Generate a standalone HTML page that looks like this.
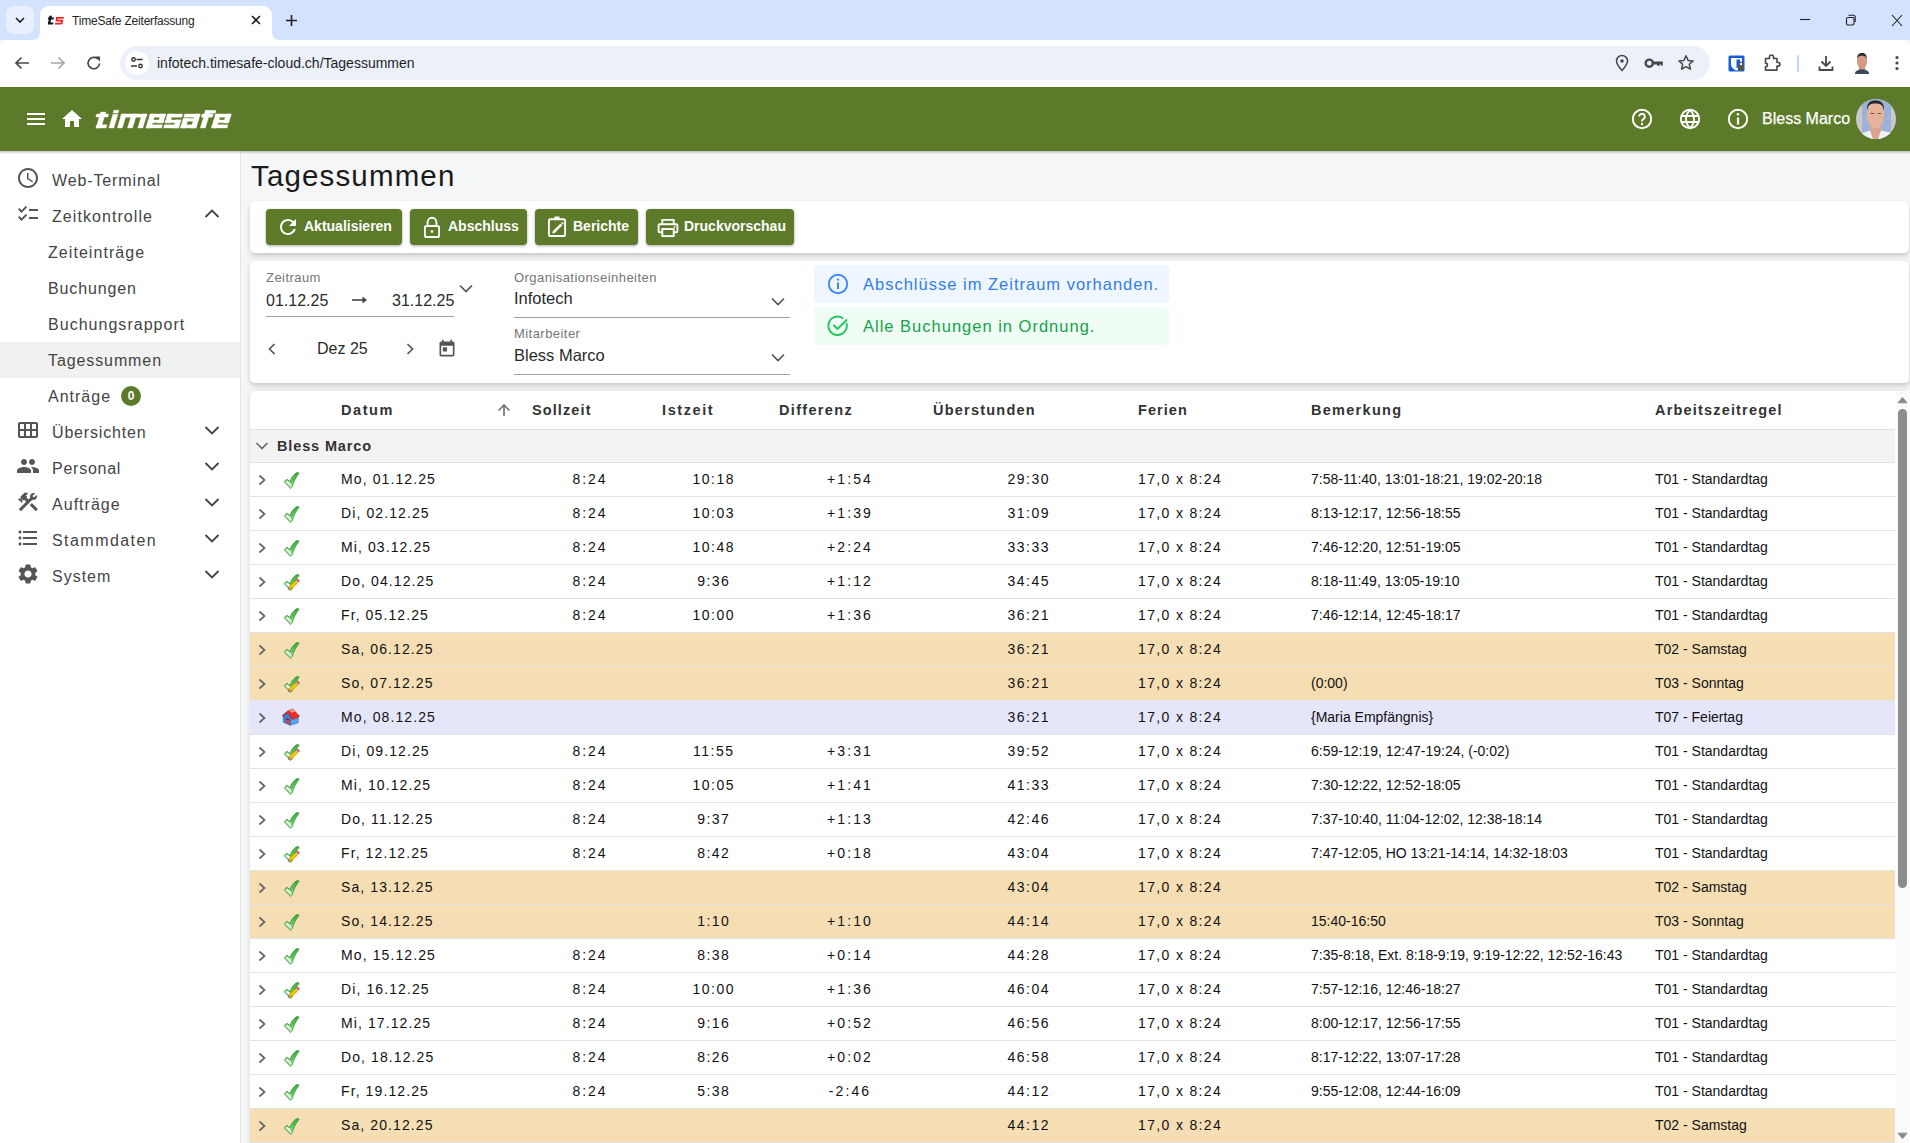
<!DOCTYPE html><html><head><meta charset="utf-8"><title>TimeSafe Zeiterfassung</title><style>
*{box-sizing:border-box;margin:0;padding:0}
html,body{width:1910px;height:1143px;overflow:hidden;background:#f5f6f8;font-family:"Liberation Sans",sans-serif;color:#212121}
.a{position:absolute;white-space:nowrap}
svg{position:absolute;display:block;overflow:visible}
.nav{position:absolute;left:52px;font-size:16px;color:#444;letter-spacing:0.95px}
.sub{position:absolute;left:48px;font-size:16px;color:#444;letter-spacing:0.95px}
.chev{position:absolute;left:202px}
.btn{position:absolute;top:209px;height:36px;background:#5c7a29;border-radius:4px;box-shadow:0 1px 3px rgba(0,0,0,.35)}
.btn .t{position:absolute;top:9px;color:#fff;font-weight:bold;font-size:14px;white-space:nowrap;line-height:16px}
.lbl{position:absolute;font-size:13px;color:#757575;white-space:nowrap;line-height:15px;letter-spacing:0.45px}
.val{position:absolute;font-size:16px;color:#2a2a2a;white-space:nowrap;line-height:18px}
.ul{position:absolute;height:1px;background:#a2a2a2}
.row{position:absolute;left:250px;width:1645px;height:34px;border-bottom:1px solid #e3e3e3;background:#fff}
.row .c{position:absolute;top:9px;font-size:14px;line-height:15px;color:#111;white-space:nowrap;letter-spacing:1.1px}
.row .r{position:absolute;top:9px;font-size:14px;line-height:15px;color:#111;white-space:nowrap}
.we{background:#f5deb3}
.ho{background:#e6e6fa}
.hd{position:absolute;top:403px;font-size:14.5px;font-weight:bold;color:#333;line-height:15px;white-space:nowrap}
</style></head><body>
<div class="a" style="left:0;top:0;width:1910px;height:40px;background:#d3e3fd"></div>
<div class="a" style="left:6px;top:6px;width:28px;height:28px;background:#e8f0fe;border-radius:8px"></div>
<svg style="left:14px;top:14px" width="12" height="12" viewBox="0 0 12 12"><path d="M2 4l4 4 4-4" fill="none" stroke="#1f1f1f" stroke-width="1.6"/></svg>
<div class="a" style="left:40px;top:6px;width:232px;height:40px;background:#fff;border-radius:9px 9px 0 0"></div>
<svg style="left:32px;top:32px" width="8" height="8" viewBox="0 0 8 8"><path d="M0 8 Q8 8 8 0 L8 8Z" fill="#fff"/></svg>
<svg style="left:272px;top:32px" width="8" height="8" viewBox="0 0 8 8"><path d="M8 8 Q0 8 0 0 L0 8Z" fill="#fff"/></svg>
<svg style="left:47px;top:15px" width="18" height="10" viewBox="0 0 18 10"><path d="M2.3 0.8L5 0.8 4.6 2.6 7 2.6 6.6 4.4 4.2 4.4 3.5 7.6 6.5 7.6 6 9.5 1.8 9.5C1 9.5 0.7 9 0.9 8.2L1.8 4.4 0.8 4.4 1.2 2.6 2 2.6Z" fill="#161616"/><path d="M9 2L17 2 16.6 3.8 10.8 3.8 10.6 4.8 15 4.8C15.9 4.8 16.3 5.3 16.1 6.2L15.5 8.4C15.3 9.1 14.8 9.5 14 9.5L7.8 9.5 8.2 7.7 13.8 7.7 14.1 6.6 9.7 6.6C8.8 6.6 8.4 6.1 8.6 5.2L9 3.2Z" fill="#ee2222"/></svg>
<div class="a" style="left:72px;top:14px;font-size:12px;color:#1f1f1f;line-height:15px;letter-spacing:-0.2px">TimeSafe Zeiterfassung</div>
<svg style="left:250px;top:14px" width="12" height="12" viewBox="0 0 12 12"><path d="M2 2l8 8M10 2l-8 8" stroke="#1f1f1f" stroke-width="1.6"/></svg>
<svg style="left:285px;top:14px" width="13" height="13" viewBox="0 0 13 13"><path d="M6.5 1v11M1 6.5h11" stroke="#1f1f1f" stroke-width="1.6"/></svg>
<svg style="left:1799px;top:13px" width="12" height="12" viewBox="0 0 12 12"><path d="M1 6.5h10" stroke="#1f1f1f" stroke-width="1.1"/></svg>
<svg style="left:1844px;top:14px" width="13" height="13" viewBox="0 0 13 13"><rect x="2.5" y="3.5" width="7.5" height="7.5" rx="1.5" fill="none" stroke="#1f1f1f" stroke-width="1.1"/><path d="M4.5 1.3h4.7a2 2 0 0 1 2 2V8" fill="none" stroke="#1f1f1f" stroke-width="1.1"/></svg>
<svg style="left:1891px;top:14px" width="12" height="13" viewBox="0 0 12 13"><path d="M1 1l10 11M11 1L1 12" stroke="#1f1f1f" stroke-width="1.1"/></svg>
<div class="a" style="left:0;top:40px;width:1910px;height:47px;background:#fff;border-radius:8px 8px 0 0"></div>
<svg style="left:13px;top:54px" width="18" height="18" viewBox="0 0 18 18"><path d="M16 9H3M8.5 3.5L3 9l5.5 5.5" fill="none" stroke="#474747" stroke-width="1.7"/></svg>
<svg style="left:49px;top:54px" width="18" height="18" viewBox="0 0 18 18"><path d="M2 9h13M9.5 3.5L15 9l-5.5 5.5" fill="none" stroke="#a8a8a8" stroke-width="1.7"/></svg>
<svg style="left:85px;top:54px" width="18" height="18" viewBox="0 0 18 18"><path d="M14.5 9.5A5.7 5.7 0 1 1 12.8 5" fill="none" stroke="#474747" stroke-width="1.7"/><path d="M10 2.5h5v5z" fill="#474747"/></svg>
<div class="a" style="left:120px;top:46px;width:1590px;height:34px;background:#ecf1f9;border-radius:17px"></div>
<div class="a" style="left:125px;top:51px;width:24px;height:24px;background:#fff;border-radius:12px"></div>
<svg style="left:129px;top:55px" width="16" height="16" viewBox="0 0 16 16"><circle cx="4.5" cy="4.5" r="1.7" fill="none" stroke="#333" stroke-width="1.4"/><path d="M7.5 4.5h6M2 11h6" stroke="#333" stroke-width="1.4"/><circle cx="11.5" cy="11" r="1.7" fill="none" stroke="#333" stroke-width="1.4"/></svg>
<div class="a" style="left:157px;top:55px;font-size:14px;color:#1f1f1f;line-height:17px">infotech.timesafe-cloud.ch/Tagessummen</div>
<svg style="left:1613px;top:54px" width="18" height="18" viewBox="0 0 18 18"><path d="M9 16.5C9 16.5 3.5 10.5 3.5 7A5.5 5.5 0 0 1 14.5 7C14.5 10.5 9 16.5 9 16.5Z" fill="none" stroke="#474747" stroke-width="1.5"/><circle cx="9" cy="7" r="1.8" fill="#474747"/></svg>
<svg style="left:1643px;top:54px" width="22" height="18" viewBox="0 0 22 18"><circle cx="6.3" cy="9.2" r="3.6" fill="none" stroke="#474747" stroke-width="2.4"/><path d="M9.5 7.6h10.3v4.2h-1.6v-1.2h-1.5v1.2h-2.6v-1.2H9.5z" fill="#474747"/></svg>
<svg style="left:1677px;top:54px" width="18" height="18" viewBox="0 0 18 18"><path d="M9 1.8l2.1 4.6 5 .5-3.8 3.4 1.1 4.9L9 12.7l-4.4 2.5 1.1-4.9L1.9 6.9l5-.5z" fill="none" stroke="#474747" stroke-width="1.5" stroke-linejoin="round"/></svg>
<svg style="left:1728px;top:55px" width="17" height="17" viewBox="0 0 17 17"><rect x="0.5" y="0.5" width="16" height="16" rx="1.5" fill="#175ddc"/><path d="M3 3h11v6.5c0 3-3 5.2-5.5 6C6 14.7 3 12.5 3 9.5z" fill="#fff"/><path d="M8.5 4.5h3.5v5c0 1.8-1.8 3.2-3.5 3.8z" fill="#175ddc"/><rect x="10" y="10" width="6" height="5.5" rx="1" fill="#555"/><path d="M11.3 10V8.8a1.7 1.7 0 0 1 3.4 0V10" fill="none" stroke="#555" stroke-width="1.2"/></svg>
<svg style="left:1763px;top:54px" width="18" height="18" viewBox="0 0 18 18"><path d="M2.5 4.5h4V3a2 2 0 0 1 4 0v1.5h3.5v4h1.2a1.8 1.8 0 0 1 0 3.6H14v4H2.5v-3.2a1.9 1.9 0 0 0 0-3.8z" fill="none" stroke="#474747" stroke-width="1.6" stroke-linejoin="round"/></svg>
<div class="a" style="left:1797px;top:55px;width:2px;height:17px;background:#c2d5f7;border-radius:1px"></div>
<svg style="left:1817px;top:54px" width="18" height="18" viewBox="0 0 18 18"><path d="M9 2v10M4.5 7.5L9 12l4.5-4.5M2.5 12.5v3.5h13v-3.5" fill="none" stroke="#474747" stroke-width="1.8"/></svg>
<svg style="left:1851px;top:52px" width="22" height="22" viewBox="0 0 22 22"><rect x="8" y="14" width="6" height="6" fill="#c98d77"/><ellipse cx="11" cy="9.5" rx="5" ry="7.5" fill="#d49a82"/><path d="M6 7.5C6 2.5 8 1 11 1S16 2.5 16 7.5C15 4.5 14 3.8 11 3.8S7 4.5 6 7.5Z" fill="#2a2a2a"/><path d="M4 22c0-3 2.5-4.5 7-4.5s7 1.5 7 4.5z" fill="#3a4a5a"/></svg>
<svg style="left:1893px;top:54px" width="8" height="18" viewBox="0 0 8 18"><circle cx="4" cy="3.5" r="1.6" fill="#474747"/><circle cx="4" cy="9" r="1.6" fill="#474747"/><circle cx="4" cy="14.5" r="1.6" fill="#474747"/></svg>
<div class="a" style="left:0;top:87px;width:1910px;height:64px;background:#5c7a29"></div>
<div class="a" style="left:27px;top:113px;width:18px;height:2px;background:#fff"></div><div class="a" style="left:27px;top:118px;width:18px;height:2px;background:#fff"></div><div class="a" style="left:27px;top:123px;width:18px;height:2px;background:#fff"></div>
<svg style="left:60px;top:107px" width="24" height="24" viewBox="0 0 24 24"><path d="M10 20v-6h4v6h5v-8h3L12 3 2 12h3v8z" fill="#fff"/></svg>
<svg style="left:90px;top:100px" width="145" height="35" viewBox="0 0 145 35"><g transform="translate(0,28) skewX(-16.7)" fill="#fff" stroke="#fff" stroke-width="0.35" stroke-linejoin="round"><rect x="6.0" y="-16.0" width="5.0" height="16.0"/><rect x="2.5" y="-14.0" width="12.0" height="3.0"/><rect x="6.0" y="-3.2" width="10.0" height="3.2"/><rect x="18.8" y="-13.8" width="5.0" height="13.8"/><rect x="18.6" y="-17.8" width="5.0" height="2.9"/><rect x="27.3" y="-14.0" width="25.5" height="3.2"/><rect x="27.3" y="-14.0" width="5.0" height="14.0"/><rect x="37.5" y="-14.0" width="5.0" height="14.0"/><rect x="47.8" y="-14.0" width="5.0" height="14.0"/><rect x="56.0" y="-14.0" width="5.0" height="14.0"/><rect x="56.0" y="-14.0" width="15.5" height="3.2"/><rect x="66.5" y="-14.0" width="5.0" height="8.8"/><rect x="56.0" y="-8.1" width="15.5" height="2.9"/><rect x="56.0" y="-3.2" width="15.5" height="3.2"/><rect x="73.5" y="-14.0" width="15.0" height="3.2"/><rect x="73.5" y="-14.0" width="5.0" height="8.8"/><rect x="73.5" y="-8.1" width="15.0" height="2.9"/><rect x="83.5" y="-8.1" width="5.0" height="8.1"/><rect x="73.5" y="-3.2" width="15.0" height="3.2"/><rect x="90.5" y="-14.0" width="15.5" height="3.2"/><rect x="101.0" y="-14.0" width="5.0" height="14.0"/><rect x="90.5" y="-9.6" width="15.5" height="2.8"/><rect x="90.5" y="-9.6" width="5.0" height="9.6"/><rect x="90.5" y="-3.2" width="15.5" height="3.2"/><rect x="110.3" y="-17.6" width="5.0" height="17.6"/><rect x="110.3" y="-17.6" width="10.5" height="2.8"/><rect x="108.0" y="-14.0" width="11.0" height="3.2"/><rect x="121.5" y="-14.0" width="5.0" height="14.0"/><rect x="121.5" y="-14.0" width="15.5" height="3.2"/><rect x="132.0" y="-14.0" width="5.0" height="8.8"/><rect x="121.5" y="-8.1" width="15.5" height="2.9"/><rect x="121.5" y="-3.2" width="15.5" height="3.2"/></g></svg>
<svg style="left:1630px;top:107px" width="24" height="24" viewBox="0 0 24 24"><circle cx="12" cy="12" r="9.2" fill="none" stroke="#fff" stroke-width="1.9"/><path d="M9.2 9.6a2.8 2.8 0 1 1 4.2 2.4c-.9.5-1.4 1-1.4 2v.6" fill="none" stroke="#fff" stroke-width="1.9"/><circle cx="12" cy="17" r="1.2" fill="#fff"/></svg>
<svg style="left:1678px;top:107px" width="24" height="24" viewBox="0 0 24 24"><circle cx="12" cy="12" r="9.2" fill="none" stroke="#fff" stroke-width="1.9"/><path d="M3.2 9h17.6M3.2 15h17.6" stroke="#fff" stroke-width="1.9"/><path d="M12 2.8c-3 3-4 6-4 9.2s1 6.2 4 9.2M12 2.8c3 3 4 6 4 9.2s-1 6.2-4 9.2" fill="none" stroke="#fff" stroke-width="1.9"/></svg>
<svg style="left:1726px;top:107px" width="24" height="24" viewBox="0 0 24 24"><circle cx="12" cy="12" r="9.2" fill="none" stroke="#fff" stroke-width="1.9"/><path d="M12 10.5v7" stroke="#fff" stroke-width="2.2"/><circle cx="12" cy="7.3" r="1.3" fill="#fff"/></svg>
<div class="a" style="left:1762px;top:110px;font-size:16px;color:#fff;line-height:18px;-webkit-text-stroke:0.25px #fff">Bless Marco</div>
<svg style="left:1856px;top:99px" width="40" height="40" viewBox="0 0 40 40"><defs><clipPath id="av"><circle cx="20" cy="20" r="20"/></clipPath></defs><g clip-path="url(#av)"><rect width="40" height="40" fill="#c9c9cd"/><rect x="6" y="0" width="29" height="37" fill="#9db2d8"/><rect x="14" y="24" width="11" height="16" fill="#d9a58e"/><ellipse cx="19.5" cy="16" rx="8.8" ry="13.5" fill="#e4b39c"/><path d="M11 12C10.5 4 14 1.5 19.5 1.5S28.5 4 28 12C27 6 25 4.5 19.5 4.5S12 6 11 12Z" fill="#2b2422"/><path d="M14.5 14.5h3.5M21.5 14.5h3.5" stroke="#8a4a3a" stroke-width="1.1"/><path d="M2 40L4 35 14 31.5 17 40ZM38 40L36 34 25 31.5 22 40Z" fill="#f2f2f4"/></g></svg>
<div class="a" style="left:0;top:151px;width:241px;height:992px;background:#fff;border-right:1px solid #e6e6e6"></div>
<div class="a" style="left:0;top:342px;width:240px;height:36px;background:#f1f1f1"></div>
<div class="nav" style="top:171px;line-height:20px;letter-spacing:0.87px">Web-Terminal</div>
<svg style="left:16px;top:166px" width="24" height="24" viewBox="0 0 24 24"><path d="M11.99 2C6.47 2 2 6.48 2 12s4.47 10 9.99 10C17.52 22 22 17.52 22 12S17.52 2 11.99 2zM12 20c-4.42 0-8-3.58-8-8s3.58-8 8-8 8 3.58 8 8-3.58 8-8 8zm.5-13H11v6l5.25 3.15.75-1.23-4.5-2.67z" fill="#555"/></svg>
<div class="nav" style="top:207px;line-height:20px;letter-spacing:1.07px">Zeitkontrolle</div>
<svg style="left:16px;top:202px" width="24" height="24" viewBox="0 0 24 24"><path d="M22 7h-9v2h9V7zm0 8h-9v2h9v-2zM5.54 11L2 7.46l1.41-1.41 2.12 2.12 4.24-4.24 1.41 1.41L5.54 11zm0 8L2 15.46l1.41-1.41 2.12 2.12 4.24-4.24 1.41 1.41L5.54 19z" fill="#555"/></svg>
<svg style="left:200px;top:202px" width="24" height="24" viewBox="0 0 24 24"><path d="M5.5 15l6.5-6.5 6.5 6.5" fill="none" stroke="#444" stroke-width="1.9"/></svg>
<div class="nav" style="top:423px;line-height:20px;letter-spacing:0.83px">Übersichten</div>
<svg style="left:16px;top:418px" width="24" height="24" viewBox="0 0 24 24"><path d="M20 4H4C2.9 4 2 4.9 2 6v12c0 1.1.9 2 2 2h16c1.1 0 2-.9 2-2V6c0-1.1-.9-2-2-2zM8 11H4V6h4v5zm6 0h-4V6h4v5zm6 0h-4V6h4v5zM8 18H4v-5h4v5zm6 0h-4v-5h4v5zm6 0h-4v-5h4v5z" fill="#555"/></svg>
<svg style="left:200px;top:418px" width="24" height="24" viewBox="0 0 24 24"><path d="M5.5 9l6.5 6.5 6.5-6.5" fill="none" stroke="#444" stroke-width="1.9"/></svg>
<div class="nav" style="top:459px;line-height:20px;letter-spacing:0.75px">Personal</div>
<svg style="left:16px;top:454px" width="24" height="24" viewBox="0 0 24 24"><path d="M16 11c1.66 0 2.99-1.34 2.99-3S17.66 5 16 5c-1.66 0-3 1.34-3 3s1.34 3 3 3zm-8 0c1.66 0 2.99-1.34 2.99-3S9.66 5 8 5C6.34 5 5 6.34 5 8s1.34 3 3 3zm0 2c-2.33 0-7 1.17-7 3.5V19h14v-2.5c0-2.33-4.67-3.5-7-3.5zm8 0c-.29 0-.62.02-.97.05 1.16.84 1.970 1.97 1.97 3.45V19h6v-2.5c0-2.33-4.67-3.5-7-3.5z" fill="#555"/></svg>
<svg style="left:200px;top:454px" width="24" height="24" viewBox="0 0 24 24"><path d="M5.5 9l6.5 6.5 6.5-6.5" fill="none" stroke="#444" stroke-width="1.9"/></svg>
<div class="nav" style="top:495px;line-height:20px;letter-spacing:1.03px">Aufträge</div>
<svg style="left:16px;top:490px" width="24" height="24" viewBox="0 0 24 24"><path d="M13.78 15.17l2.12-2.12 6 6-2.12 2.12zM17.5 10c1.93 0 3.5-1.57 3.5-3.5 0-.58-.16-1.12-.41-1.6l-2.7 2.7-1.49-1.49 2.7-2.7c-.48-.25-1.02-.41-1.6-.41C15.57 3 14 4.57 14 6.5c0 .41.08.8.21 1.16l-1.85 1.85-1.78-1.78.71-.71-1.41-1.41L12 3.49c-1.17-1.17-3.07-1.17-4.24 0L4.22 7.03l1.41 1.41H2.81l-.71.71 3.54 3.54.71-.71V9.15l1.41 1.41.71-.71 1.78 1.78-7.41 7.41 2.12 2.12L16.34 9.79c.36.13.75.21 1.16.21z" fill="#555"/></svg>
<svg style="left:200px;top:490px" width="24" height="24" viewBox="0 0 24 24"><path d="M5.5 9l6.5 6.5 6.5-6.5" fill="none" stroke="#444" stroke-width="1.9"/></svg>
<div class="nav" style="top:531px;line-height:20px;letter-spacing:1.45px">Stammdaten</div>
<svg style="left:16px;top:526px" width="24" height="24" viewBox="0 0 24 24"><path d="M4 10.5c-.83 0-1.5.67-1.5 1.5s.67 1.5 1.5 1.5 1.5-.67 1.5-1.5-.67-1.5-1.5-1.5zm0-6c-.83 0-1.5.67-1.5 1.5S3.17 7.5 4 7.5 5.5 6.83 5.5 6 4.83 4.5 4 4.5zm0 12c-.83 0-1.5.68-1.5 1.5s.68 1.5 1.5 1.5 1.5-.68 1.5-1.5-.67-1.5-1.5-1.5zM7 19h14v-2H7v2zm0-6h14v-2H7v2zm0-8v2h14V5H7z" fill="#555"/></svg>
<svg style="left:200px;top:526px" width="24" height="24" viewBox="0 0 24 24"><path d="M5.5 9l6.5 6.5 6.5-6.5" fill="none" stroke="#444" stroke-width="1.9"/></svg>
<div class="nav" style="top:567px;line-height:20px;letter-spacing:1.00px">System</div>
<svg style="left:16px;top:562px" width="24" height="24" viewBox="0 0 24 24"><path d="M19.14 12.94c.04-.3.06-.61.06-.94 0-.32-.02-.64-.07-.94l2.03-1.58c.18-.14.23-.41.12-.61l-1.92-3.32c-.12-.22-.37-.29-.59-.22l-2.39.96c-.5-.38-1.03-.7-1.62-.94l-.36-2.54c-.04-.24-.24-.41-.48-.41h-3.84c-.24 0-.43.17-.47.41l-.36 2.54c-.59.24-1.13.57-1.62.94l-2.39-.96c-.22-.08-.47 0-.59.22L2.74 8.87c-.12.21-.08.47.12.61l2.03 1.58c-.05.3-.09.63-.09.94s.02.64.07.94l-2.03 1.58c-.18.14-.23.41-.12.61l1.92 3.32c.12.22.37.29.59.22l2.39-.96c.5.38 1.03.7 1.62.94l.36 2.54c.05.24.24.41.48.41h3.84c.24 0 .44-.17.47-.41l.36-2.54c.59-.24 1.13-.56 1.62-.94l2.39.96c.22.08.47 0 .59-.22l1.92-3.32c.12-.22.07-.47-.12-.61l-2.01-1.58zM12 15.6c-1.98 0-3.6-1.62-3.6-3.6s1.62-3.6 3.6-3.6 3.6 1.62 3.6 3.6-1.62 3.6-3.6 3.6z" fill="#555"/></svg>
<svg style="left:200px;top:562px" width="24" height="24" viewBox="0 0 24 24"><path d="M5.5 9l6.5 6.5 6.5-6.5" fill="none" stroke="#444" stroke-width="1.9"/></svg>
<div class="sub" style="top:243px;line-height:20px;letter-spacing:1.06px">Zeiteinträge</div>
<div class="sub" style="top:279px;line-height:20px;letter-spacing:0.88px">Buchungen</div>
<div class="sub" style="top:315px;line-height:20px;letter-spacing:1.03px">Buchungsrapport</div>
<div class="sub" style="top:351px;line-height:20px;letter-spacing:0.90px">Tagessummen</div>
<div class="sub" style="top:387px;line-height:20px;letter-spacing:1.00px">Anträge</div>
<div class="a" style="left:121px;top:386px;width:20px;height:20px;border-radius:10px;background:#5c7a29;color:#fff;font-size:12px;font-weight:bold;text-align:center;line-height:20px">0</div>
<div class="a" style="left:251px;top:161px;font-size:29.5px;color:#1a1a1a;line-height:30px;letter-spacing:1.15px">Tagessummen</div>
<div class="a" style="left:250px;top:201px;width:1659px;height:52px;background:#fff;border-radius:5px;box-shadow:0 2px 4px rgba(0,0,0,.14),0 6px 8px rgba(0,0,0,.06)"></div>
<div class="btn" style="left:266px;width:136px"><svg style="left:10px;top:6px" width="24" height="24" viewBox="0 0 24 24"><path d="M17.65 6.35C16.2 4.9 14.21 4 12 4c-4.42 0-7.99 3.58-7.99 8s3.57 8 7.99 8c3.73 0 6.84-2.55 7.73-6h-2.08c-.82 2.33-3.04 4-5.65 4-3.31 0-6-2.69-6-6s2.69-6 6-6c1.66 0 3.14.69 4.22 1.78L13 11h7V4l-2.35 2.35z" fill="#fff"/></svg><div class="t" style="left:38px">Aktualisieren</div></div>
<div class="btn" style="left:410px;width:117px"><svg style="left:10px;top:6px" width="24" height="24" viewBox="0 0 24 24"><rect x="4.9" y="11" width="14.2" height="11" rx="1.6" fill="none" stroke="#fff" stroke-width="1.9"/><path d="M7.6 11V7.2a4.4 4.4 0 0 1 8.8 0V11" fill="none" stroke="#fff" stroke-width="1.9"/><circle cx="12" cy="16.5" r="1.4" fill="#fff"/></svg><div class="t" style="left:38px">Abschluss</div></div>
<div class="btn" style="left:535px;width:103px"><svg style="left:10px;top:6px" width="24" height="24" viewBox="0 0 24 24"><rect x="3.9" y="4.2" width="16.2" height="16.8" rx="1.6" fill="none" stroke="#fff" stroke-width="1.9"/><rect x="9.3" y="1.6" width="5.4" height="3.2" rx="1.2" fill="#fff"/><path d="M7.2 18.6l.7-2.6 7.6-7.6 1.9 1.9-7.6 7.6z" fill="#fff"/><path d="M16.2 7.7l.9-.9 1.9 1.9-.9.9z" fill="#fff"/></svg><div class="t" style="left:38px">Berichte</div></div>
<div class="btn" style="left:646px;width:148px"><svg style="left:10px;top:6px" width="24" height="24" viewBox="0 0 24 24"><path d="M6.3 9.3V4.9h11.4v4.4" fill="none" stroke="#fff" stroke-width="1.9"/><path d="M6.3 17.2H3.6a1 1 0 0 1-1-1V10.3a1 1 0 0 1 1-1h16.8a1 1 0 0 1 1 1v5.9a1 1 0 0 1-1 1h-2.7" fill="none" stroke="#fff" stroke-width="1.9"/><rect x="6.3" y="14" width="11.4" height="7.1" fill="none" stroke="#fff" stroke-width="1.9"/><circle cx="18.6" cy="11.8" r="0.9" fill="#fff"/></svg><div class="t" style="left:38px">Druckvorschau</div></div>
<div class="a" style="left:250px;top:261px;width:1659px;height:122px;background:#fff;border-radius:5px;box-shadow:0 2px 4px rgba(0,0,0,.14),0 6px 8px rgba(0,0,0,.06)"></div>
<div class="lbl" style="left:266px;top:270px">Zeitraum</div>
<div class="val" style="left:266px;top:292px">01.12.25</div>
<svg style="left:351px;top:294px" width="18" height="12" viewBox="0 0 18 12"><path d="M1 6h14" stroke="#444" stroke-width="1.6"/><path d="M11.5 2.5L16 6l-4.5 3.5z" fill="#444"/></svg>
<div class="val" style="left:392px;top:292px">31.12.25</div>
<div class="ul" style="left:266px;top:316px;width:188px"></div>
<svg style="left:458px;top:282px" width="16" height="14" viewBox="0 0 16 14"><path d="M2 3.5l6 6 6-6" fill="none" stroke="#555" stroke-width="1.7"/></svg>
<svg style="left:264px;top:341px" width="16" height="16" viewBox="0 0 16 16"><path d="M10.5 3l-5 5 5 5" fill="none" stroke="#555" stroke-width="1.7"/></svg>
<div class="val" style="left:317px;top:340px">Dez 25</div>
<svg style="left:402px;top:341px" width="16" height="16" viewBox="0 0 16 16"><path d="M5.5 3l5 5-5 5" fill="none" stroke="#555" stroke-width="1.7"/></svg>
<svg style="left:437px;top:339px" width="20" height="20" viewBox="0 0 24 24"><path d="M19 3h-1V1h-2v2H8V1H6v2H5c-1.11 0-1.99.9-1.99 2L3 19c0 1.1.89 2 2 2h14c1.1 0 2-.9 2-2V5c0-1.1-.9-2-2-2zm0 16H5V8h14v11zM7 10h5v5H7z" fill="#555"/></svg>
<div class="lbl" style="left:514px;top:270px">Organisationseinheiten</div>
<div class="val" style="left:514px;top:289px;font-size:16.5px">Infotech</div>
<div class="ul" style="left:514px;top:317px;width:276px"></div>
<svg style="left:770px;top:295px" width="16" height="14" viewBox="0 0 16 14"><path d="M2 3.5l6 6 6-6" fill="none" stroke="#555" stroke-width="1.7"/></svg>
<div class="lbl" style="left:514px;top:326px">Mitarbeiter</div>
<div class="val" style="left:514px;top:346px;font-size:16.5px">Bless Marco</div>
<div class="ul" style="left:514px;top:374px;width:276px"></div>
<svg style="left:770px;top:351px" width="16" height="14" viewBox="0 0 16 14"><path d="M2 3.5l6 6 6-6" fill="none" stroke="#555" stroke-width="1.7"/></svg>
<div class="a" style="left:814px;top:265px;width:355px;height:38px;background:#eff6ff;border-radius:4px"></div>
<svg style="left:826px;top:272px" width="24" height="24" viewBox="0 0 24 24"><circle cx="12" cy="12" r="9.2" fill="none" stroke="#3b8bf6" stroke-width="1.9"/><path d="M12 10.5v6.5" stroke="#3b8bf6" stroke-width="2"/><circle cx="12" cy="7.6" r="1.2" fill="#3b8bf6"/></svg>
<div class="a" style="left:863px;top:275px;font-size:16.5px;color:#2f7fea;letter-spacing:1.0px;line-height:18px">Abschlüsse im Zeitraum vorhanden.</div>
<div class="a" style="left:814px;top:307px;width:355px;height:38px;background:#f0fdf4;border-radius:4px"></div>
<svg style="left:826px;top:314px" width="24" height="24" viewBox="0 0 24 24"><path d="M20.6 9.8A9.2 9.2 0 1 1 16.5 4" fill="none" stroke="#22c55e" stroke-width="1.9" stroke-linecap="round"/><path d="M8 11.5l3.5 3.5L20.5 6" fill="none" stroke="#22c55e" stroke-width="1.9" stroke-linecap="round" stroke-linejoin="round"/></svg>
<div class="a" style="left:863px;top:317px;font-size:16.5px;color:#16a34a;letter-spacing:1.0px;line-height:18px">Alle Buchungen in Ordnung.</div>
<div class="a" style="left:250px;top:391px;width:1659px;height:760px;background:#fff;border-radius:5px;box-shadow:0 2px 5px rgba(0,0,0,.13)"></div>
<div class="a" style="left:250px;top:429px;width:1645px;height:1px;background:#e0e0e0"></div>
<div class="hd" style="left:341px;letter-spacing:1.57px">Datum</div>
<div class="hd" style="left:532px;letter-spacing:1.10px">Sollzeit</div>
<div class="hd" style="left:662px;letter-spacing:1.60px">Istzeit</div>
<div class="hd" style="left:779px;letter-spacing:1.33px">Differenz</div>
<div class="hd" style="left:933px;letter-spacing:1.22px">Überstunden</div>
<div class="hd" style="left:1138px;letter-spacing:1.06px">Ferien</div>
<div class="hd" style="left:1311px;letter-spacing:1.28px">Bemerkung</div>
<div class="hd" style="left:1655px;letter-spacing:1.18px">Arbeitszeitregel</div>
<svg style="left:495px;top:401px" width="18" height="18" viewBox="0 0 24 24"><path d="M4 12l1.41 1.41L11 7.83V20h2V7.83l5.58 5.59L20 12l-8-8-8 8z" fill="#666"/></svg>
<div class="a" style="left:250px;top:430px;width:1645px;height:33px;background:#f3f3f3;border-bottom:1px solid #e0e0e0"></div>
<svg style="left:254px;top:440px" width="16" height="12" viewBox="0 0 16 12"><path d="M2.5 3l5.5 5.5L13.5 3" fill="none" stroke="#666" stroke-width="1.6"/></svg>
<div class="a" style="left:277px;top:439px;font-size:14.5px;font-weight:bold;color:#333;letter-spacing:0.86px;line-height:15px">Bless Marco</div>
<div class="row " style="top:463px">
<svg style="left:6px;top:10px" width="12" height="14" viewBox="0 0 12 14"><path d="M3.5 2.5L8.5 7l-5 4.5" fill="none" stroke="#666" stroke-width="1.7"/></svg>
<svg style="left:34px;top:9px" width="16" height="17" viewBox="0 0 16 17"><defs><linearGradient id="g1" x1="0" y1="0" x2="0" y2="1"><stop offset="0" stop-color="#35b035"/><stop offset="0.55" stop-color="#5cc85c"/><stop offset="1" stop-color="#b4ecb0"/></linearGradient></defs><path d="M0.3 9.8L2.8 7.2 6 9.6C6.8 6.6 9 3 12.4 0.7 13.6 0.2 14.8 0.4 15 1.5 12.4 4.4 9.6 9.4 8.4 14.6L7 16.3 6.3 16.3Z" fill="url(#g1)" stroke="#3d7d3d" stroke-width="0.65" stroke-linejoin="round"/><path d="M1.4 9.9L2.9 8.4 6.3 11 7.3 14.8z" fill="#f2fcee"/></svg>
<div class="c" style="left:91px">Mo, 01.12.25</div>
<div class="c" style="left:339px;width:120px;text-align:center;margin-left:-60px;letter-spacing:1.95px;text-indent:1.95px">8:24</div>
<div class="c" style="left:463px;width:120px;text-align:center;margin-left:-60px;letter-spacing:1.50px;text-indent:1.50px">10:18</div>
<div class="c" style="left:599px;width:120px;text-align:center;margin-left:-60px;letter-spacing:2.10px;text-indent:2.10px">+1:54</div>
<div class="c" style="left:778px;width:120px;text-align:center;margin-left:-60px;letter-spacing:1.50px;text-indent:1.50px">29:30</div>
<div class="c" style="left:888px;letter-spacing:1.35px">17,0 x 8:24</div>
<div class="r" style="left:1061px">7:58-11:40, 13:01-18:21, 19:02-20:18</div>
<div class="r" style="left:1405px">T01 - Standardtag</div>
</div>
<div class="row " style="top:497px">
<svg style="left:6px;top:10px" width="12" height="14" viewBox="0 0 12 14"><path d="M3.5 2.5L8.5 7l-5 4.5" fill="none" stroke="#666" stroke-width="1.7"/></svg>
<svg style="left:34px;top:9px" width="16" height="17" viewBox="0 0 16 17"><defs><linearGradient id="g1" x1="0" y1="0" x2="0" y2="1"><stop offset="0" stop-color="#35b035"/><stop offset="0.55" stop-color="#5cc85c"/><stop offset="1" stop-color="#b4ecb0"/></linearGradient></defs><path d="M0.3 9.8L2.8 7.2 6 9.6C6.8 6.6 9 3 12.4 0.7 13.6 0.2 14.8 0.4 15 1.5 12.4 4.4 9.6 9.4 8.4 14.6L7 16.3 6.3 16.3Z" fill="url(#g1)" stroke="#3d7d3d" stroke-width="0.65" stroke-linejoin="round"/><path d="M1.4 9.9L2.9 8.4 6.3 11 7.3 14.8z" fill="#f2fcee"/></svg>
<div class="c" style="left:91px">Di, 02.12.25</div>
<div class="c" style="left:339px;width:120px;text-align:center;margin-left:-60px;letter-spacing:1.95px;text-indent:1.95px">8:24</div>
<div class="c" style="left:463px;width:120px;text-align:center;margin-left:-60px;letter-spacing:1.50px;text-indent:1.50px">10:03</div>
<div class="c" style="left:599px;width:120px;text-align:center;margin-left:-60px;letter-spacing:2.10px;text-indent:2.10px">+1:39</div>
<div class="c" style="left:778px;width:120px;text-align:center;margin-left:-60px;letter-spacing:1.50px;text-indent:1.50px">31:09</div>
<div class="c" style="left:888px;letter-spacing:1.35px">17,0 x 8:24</div>
<div class="r" style="left:1061px">8:13-12:17, 12:56-18:55</div>
<div class="r" style="left:1405px">T01 - Standardtag</div>
</div>
<div class="row " style="top:531px">
<svg style="left:6px;top:10px" width="12" height="14" viewBox="0 0 12 14"><path d="M3.5 2.5L8.5 7l-5 4.5" fill="none" stroke="#666" stroke-width="1.7"/></svg>
<svg style="left:34px;top:9px" width="16" height="17" viewBox="0 0 16 17"><defs><linearGradient id="g1" x1="0" y1="0" x2="0" y2="1"><stop offset="0" stop-color="#35b035"/><stop offset="0.55" stop-color="#5cc85c"/><stop offset="1" stop-color="#b4ecb0"/></linearGradient></defs><path d="M0.3 9.8L2.8 7.2 6 9.6C6.8 6.6 9 3 12.4 0.7 13.6 0.2 14.8 0.4 15 1.5 12.4 4.4 9.6 9.4 8.4 14.6L7 16.3 6.3 16.3Z" fill="url(#g1)" stroke="#3d7d3d" stroke-width="0.65" stroke-linejoin="round"/><path d="M1.4 9.9L2.9 8.4 6.3 11 7.3 14.8z" fill="#f2fcee"/></svg>
<div class="c" style="left:91px">Mi, 03.12.25</div>
<div class="c" style="left:339px;width:120px;text-align:center;margin-left:-60px;letter-spacing:1.95px;text-indent:1.95px">8:24</div>
<div class="c" style="left:463px;width:120px;text-align:center;margin-left:-60px;letter-spacing:1.50px;text-indent:1.50px">10:48</div>
<div class="c" style="left:599px;width:120px;text-align:center;margin-left:-60px;letter-spacing:2.10px;text-indent:2.10px">+2:24</div>
<div class="c" style="left:778px;width:120px;text-align:center;margin-left:-60px;letter-spacing:1.50px;text-indent:1.50px">33:33</div>
<div class="c" style="left:888px;letter-spacing:1.35px">17,0 x 8:24</div>
<div class="r" style="left:1061px">7:46-12:20, 12:51-19:05</div>
<div class="r" style="left:1405px">T01 - Standardtag</div>
</div>
<div class="row " style="top:565px">
<svg style="left:6px;top:10px" width="12" height="14" viewBox="0 0 12 14"><path d="M3.5 2.5L8.5 7l-5 4.5" fill="none" stroke="#666" stroke-width="1.7"/></svg>
<svg style="left:34px;top:9px" width="16" height="17" viewBox="0 0 16 17"><defs><linearGradient id="g1" x1="0" y1="0" x2="0" y2="1"><stop offset="0" stop-color="#35b035"/><stop offset="0.55" stop-color="#5cc85c"/><stop offset="1" stop-color="#b4ecb0"/></linearGradient></defs><path d="M0.3 9.8L2.8 7.2 6 9.6C6.8 6.6 9 3 12.4 0.7 13.6 0.2 14.8 0.4 15 1.5 12.4 4.4 9.6 9.4 8.4 14.6L7 16.3 6.3 16.3Z" fill="url(#g1)" stroke="#3d7d3d" stroke-width="0.65" stroke-linejoin="round"/><path d="M1.4 9.9L2.9 8.4 6.3 11 7.3 14.8z" fill="#f2fcee"/><path d="M4.2 15.7L5.2 12.5 7.4 14.9Z" fill="#e8b070" stroke="#6b3a10" stroke-width="0.4"/><path d="M5.2 12.5L11.7 6.4 13.9 8.8 7.4 14.9Z" fill="#f5c800" stroke="#a86a00" stroke-width="0.45"/><path d="M11.7 6.4L12.6 5.55 14.8 7.95 13.9 8.8Z" fill="#b8b8c0"/><path d="M12.6 5.55L13.5 4.7 15.7 7.1 14.8 7.95Z" fill="#e04848" stroke="#8a2a10" stroke-width="0.35"/></svg>
<div class="c" style="left:91px">Do, 04.12.25</div>
<div class="c" style="left:339px;width:120px;text-align:center;margin-left:-60px;letter-spacing:1.95px;text-indent:1.95px">8:24</div>
<div class="c" style="left:463px;width:120px;text-align:center;margin-left:-60px;letter-spacing:1.50px;text-indent:1.50px">9:36</div>
<div class="c" style="left:599px;width:120px;text-align:center;margin-left:-60px;letter-spacing:2.10px;text-indent:2.10px">+1:12</div>
<div class="c" style="left:778px;width:120px;text-align:center;margin-left:-60px;letter-spacing:1.50px;text-indent:1.50px">34:45</div>
<div class="c" style="left:888px;letter-spacing:1.35px">17,0 x 8:24</div>
<div class="r" style="left:1061px">8:18-11:49, 13:05-19:10</div>
<div class="r" style="left:1405px">T01 - Standardtag</div>
</div>
<div class="row " style="top:599px">
<svg style="left:6px;top:10px" width="12" height="14" viewBox="0 0 12 14"><path d="M3.5 2.5L8.5 7l-5 4.5" fill="none" stroke="#666" stroke-width="1.7"/></svg>
<svg style="left:34px;top:9px" width="16" height="17" viewBox="0 0 16 17"><defs><linearGradient id="g1" x1="0" y1="0" x2="0" y2="1"><stop offset="0" stop-color="#35b035"/><stop offset="0.55" stop-color="#5cc85c"/><stop offset="1" stop-color="#b4ecb0"/></linearGradient></defs><path d="M0.3 9.8L2.8 7.2 6 9.6C6.8 6.6 9 3 12.4 0.7 13.6 0.2 14.8 0.4 15 1.5 12.4 4.4 9.6 9.4 8.4 14.6L7 16.3 6.3 16.3Z" fill="url(#g1)" stroke="#3d7d3d" stroke-width="0.65" stroke-linejoin="round"/><path d="M1.4 9.9L2.9 8.4 6.3 11 7.3 14.8z" fill="#f2fcee"/></svg>
<div class="c" style="left:91px">Fr, 05.12.25</div>
<div class="c" style="left:339px;width:120px;text-align:center;margin-left:-60px;letter-spacing:1.95px;text-indent:1.95px">8:24</div>
<div class="c" style="left:463px;width:120px;text-align:center;margin-left:-60px;letter-spacing:1.50px;text-indent:1.50px">10:00</div>
<div class="c" style="left:599px;width:120px;text-align:center;margin-left:-60px;letter-spacing:2.10px;text-indent:2.10px">+1:36</div>
<div class="c" style="left:778px;width:120px;text-align:center;margin-left:-60px;letter-spacing:1.50px;text-indent:1.50px">36:21</div>
<div class="c" style="left:888px;letter-spacing:1.35px">17,0 x 8:24</div>
<div class="r" style="left:1061px">7:46-12:14, 12:45-18:17</div>
<div class="r" style="left:1405px">T01 - Standardtag</div>
</div>
<div class="row we" style="top:633px">
<svg style="left:6px;top:10px" width="12" height="14" viewBox="0 0 12 14"><path d="M3.5 2.5L8.5 7l-5 4.5" fill="none" stroke="#666" stroke-width="1.7"/></svg>
<svg style="left:34px;top:9px" width="16" height="17" viewBox="0 0 16 17"><defs><linearGradient id="g1" x1="0" y1="0" x2="0" y2="1"><stop offset="0" stop-color="#35b035"/><stop offset="0.55" stop-color="#5cc85c"/><stop offset="1" stop-color="#b4ecb0"/></linearGradient></defs><path d="M0.3 9.8L2.8 7.2 6 9.6C6.8 6.6 9 3 12.4 0.7 13.6 0.2 14.8 0.4 15 1.5 12.4 4.4 9.6 9.4 8.4 14.6L7 16.3 6.3 16.3Z" fill="url(#g1)" stroke="#3d7d3d" stroke-width="0.65" stroke-linejoin="round"/><path d="M1.4 9.9L2.9 8.4 6.3 11 7.3 14.8z" fill="#f2fcee"/></svg>
<div class="c" style="left:91px">Sa, 06.12.25</div>
<div class="c" style="left:778px;width:120px;text-align:center;margin-left:-60px;letter-spacing:1.50px;text-indent:1.50px">36:21</div>
<div class="c" style="left:888px;letter-spacing:1.35px">17,0 x 8:24</div>
<div class="r" style="left:1405px">T02 - Samstag</div>
</div>
<div class="row we" style="top:667px">
<svg style="left:6px;top:10px" width="12" height="14" viewBox="0 0 12 14"><path d="M3.5 2.5L8.5 7l-5 4.5" fill="none" stroke="#666" stroke-width="1.7"/></svg>
<svg style="left:34px;top:9px" width="16" height="17" viewBox="0 0 16 17"><defs><linearGradient id="g1" x1="0" y1="0" x2="0" y2="1"><stop offset="0" stop-color="#35b035"/><stop offset="0.55" stop-color="#5cc85c"/><stop offset="1" stop-color="#b4ecb0"/></linearGradient></defs><path d="M0.3 9.8L2.8 7.2 6 9.6C6.8 6.6 9 3 12.4 0.7 13.6 0.2 14.8 0.4 15 1.5 12.4 4.4 9.6 9.4 8.4 14.6L7 16.3 6.3 16.3Z" fill="url(#g1)" stroke="#3d7d3d" stroke-width="0.65" stroke-linejoin="round"/><path d="M1.4 9.9L2.9 8.4 6.3 11 7.3 14.8z" fill="#f2fcee"/><path d="M4.2 15.7L5.2 12.5 7.4 14.9Z" fill="#e8b070" stroke="#6b3a10" stroke-width="0.4"/><path d="M5.2 12.5L11.7 6.4 13.9 8.8 7.4 14.9Z" fill="#f5c800" stroke="#a86a00" stroke-width="0.45"/><path d="M11.7 6.4L12.6 5.55 14.8 7.95 13.9 8.8Z" fill="#b8b8c0"/><path d="M12.6 5.55L13.5 4.7 15.7 7.1 14.8 7.95Z" fill="#e04848" stroke="#8a2a10" stroke-width="0.35"/></svg>
<div class="c" style="left:91px">So, 07.12.25</div>
<div class="c" style="left:778px;width:120px;text-align:center;margin-left:-60px;letter-spacing:1.50px;text-indent:1.50px">36:21</div>
<div class="c" style="left:888px;letter-spacing:1.35px">17,0 x 8:24</div>
<div class="r" style="left:1061px">(0:00)</div>
<div class="r" style="left:1405px">T03 - Sonntag</div>
</div>
<div class="row ho" style="top:701px">
<svg style="left:6px;top:10px" width="12" height="14" viewBox="0 0 12 14"><path d="M3.5 2.5L8.5 7l-5 4.5" fill="none" stroke="#666" stroke-width="1.7"/></svg>
<svg style="left:30px;top:5px" width="24" height="24" viewBox="0 0 24 24"><path d="M3.3 10.3L7.6 6.6 10.9 11.5 10.3 19.3 3.4 16.3Z" fill="#2f80e6" stroke="#1d4f99" stroke-width="0.5"/><path d="M10.9 11.5L18.3 10.3 18.2 16.8 10.3 19.3Z" fill="#55a8f2" stroke="#1d4f99" stroke-width="0.5"/><path d="M6 12.3L9.4 13.4 9.7 18.4 6.2 17Z" fill="#e43a3a"/><path d="M6 12.3L9.4 13.4 9.5 14.6 6.1 13.5Z" fill="#8a2200"/><path d="M2.2 9.6L7.6 5.1 12.7 2.9 19.6 10.2 12.4 13.8 7.6 6.6 3.2 10.5Z" fill="#ee2a2a" stroke="#8a2a10" stroke-width="0.5" stroke-linejoin="round"/><path d="M9.5 4.6L12.7 3.2 15 5.6 11.5 7z" fill="#f79a8a"/></svg>
<div class="c" style="left:91px">Mo, 08.12.25</div>
<div class="c" style="left:778px;width:120px;text-align:center;margin-left:-60px;letter-spacing:1.50px;text-indent:1.50px">36:21</div>
<div class="c" style="left:888px;letter-spacing:1.35px">17,0 x 8:24</div>
<div class="r" style="left:1061px">{Maria Empfängnis}</div>
<div class="r" style="left:1405px">T07 - Feiertag</div>
</div>
<div class="row " style="top:735px">
<svg style="left:6px;top:10px" width="12" height="14" viewBox="0 0 12 14"><path d="M3.5 2.5L8.5 7l-5 4.5" fill="none" stroke="#666" stroke-width="1.7"/></svg>
<svg style="left:34px;top:9px" width="16" height="17" viewBox="0 0 16 17"><defs><linearGradient id="g1" x1="0" y1="0" x2="0" y2="1"><stop offset="0" stop-color="#35b035"/><stop offset="0.55" stop-color="#5cc85c"/><stop offset="1" stop-color="#b4ecb0"/></linearGradient></defs><path d="M0.3 9.8L2.8 7.2 6 9.6C6.8 6.6 9 3 12.4 0.7 13.6 0.2 14.8 0.4 15 1.5 12.4 4.4 9.6 9.4 8.4 14.6L7 16.3 6.3 16.3Z" fill="url(#g1)" stroke="#3d7d3d" stroke-width="0.65" stroke-linejoin="round"/><path d="M1.4 9.9L2.9 8.4 6.3 11 7.3 14.8z" fill="#f2fcee"/><path d="M4.2 15.7L5.2 12.5 7.4 14.9Z" fill="#e8b070" stroke="#6b3a10" stroke-width="0.4"/><path d="M5.2 12.5L11.7 6.4 13.9 8.8 7.4 14.9Z" fill="#f5c800" stroke="#a86a00" stroke-width="0.45"/><path d="M11.7 6.4L12.6 5.55 14.8 7.95 13.9 8.8Z" fill="#b8b8c0"/><path d="M12.6 5.55L13.5 4.7 15.7 7.1 14.8 7.95Z" fill="#e04848" stroke="#8a2a10" stroke-width="0.35"/></svg>
<div class="c" style="left:91px">Di, 09.12.25</div>
<div class="c" style="left:339px;width:120px;text-align:center;margin-left:-60px;letter-spacing:1.95px;text-indent:1.95px">8:24</div>
<div class="c" style="left:463px;width:120px;text-align:center;margin-left:-60px;letter-spacing:1.50px;text-indent:1.50px">11:55</div>
<div class="c" style="left:599px;width:120px;text-align:center;margin-left:-60px;letter-spacing:2.10px;text-indent:2.10px">+3:31</div>
<div class="c" style="left:778px;width:120px;text-align:center;margin-left:-60px;letter-spacing:1.50px;text-indent:1.50px">39:52</div>
<div class="c" style="left:888px;letter-spacing:1.35px">17,0 x 8:24</div>
<div class="r" style="left:1061px">6:59-12:19, 12:47-19:24, (-0:02)</div>
<div class="r" style="left:1405px">T01 - Standardtag</div>
</div>
<div class="row " style="top:769px">
<svg style="left:6px;top:10px" width="12" height="14" viewBox="0 0 12 14"><path d="M3.5 2.5L8.5 7l-5 4.5" fill="none" stroke="#666" stroke-width="1.7"/></svg>
<svg style="left:34px;top:9px" width="16" height="17" viewBox="0 0 16 17"><defs><linearGradient id="g1" x1="0" y1="0" x2="0" y2="1"><stop offset="0" stop-color="#35b035"/><stop offset="0.55" stop-color="#5cc85c"/><stop offset="1" stop-color="#b4ecb0"/></linearGradient></defs><path d="M0.3 9.8L2.8 7.2 6 9.6C6.8 6.6 9 3 12.4 0.7 13.6 0.2 14.8 0.4 15 1.5 12.4 4.4 9.6 9.4 8.4 14.6L7 16.3 6.3 16.3Z" fill="url(#g1)" stroke="#3d7d3d" stroke-width="0.65" stroke-linejoin="round"/><path d="M1.4 9.9L2.9 8.4 6.3 11 7.3 14.8z" fill="#f2fcee"/></svg>
<div class="c" style="left:91px">Mi, 10.12.25</div>
<div class="c" style="left:339px;width:120px;text-align:center;margin-left:-60px;letter-spacing:1.95px;text-indent:1.95px">8:24</div>
<div class="c" style="left:463px;width:120px;text-align:center;margin-left:-60px;letter-spacing:1.50px;text-indent:1.50px">10:05</div>
<div class="c" style="left:599px;width:120px;text-align:center;margin-left:-60px;letter-spacing:2.10px;text-indent:2.10px">+1:41</div>
<div class="c" style="left:778px;width:120px;text-align:center;margin-left:-60px;letter-spacing:1.50px;text-indent:1.50px">41:33</div>
<div class="c" style="left:888px;letter-spacing:1.35px">17,0 x 8:24</div>
<div class="r" style="left:1061px">7:30-12:22, 12:52-18:05</div>
<div class="r" style="left:1405px">T01 - Standardtag</div>
</div>
<div class="row " style="top:803px">
<svg style="left:6px;top:10px" width="12" height="14" viewBox="0 0 12 14"><path d="M3.5 2.5L8.5 7l-5 4.5" fill="none" stroke="#666" stroke-width="1.7"/></svg>
<svg style="left:34px;top:9px" width="16" height="17" viewBox="0 0 16 17"><defs><linearGradient id="g1" x1="0" y1="0" x2="0" y2="1"><stop offset="0" stop-color="#35b035"/><stop offset="0.55" stop-color="#5cc85c"/><stop offset="1" stop-color="#b4ecb0"/></linearGradient></defs><path d="M0.3 9.8L2.8 7.2 6 9.6C6.8 6.6 9 3 12.4 0.7 13.6 0.2 14.8 0.4 15 1.5 12.4 4.4 9.6 9.4 8.4 14.6L7 16.3 6.3 16.3Z" fill="url(#g1)" stroke="#3d7d3d" stroke-width="0.65" stroke-linejoin="round"/><path d="M1.4 9.9L2.9 8.4 6.3 11 7.3 14.8z" fill="#f2fcee"/></svg>
<div class="c" style="left:91px">Do, 11.12.25</div>
<div class="c" style="left:339px;width:120px;text-align:center;margin-left:-60px;letter-spacing:1.95px;text-indent:1.95px">8:24</div>
<div class="c" style="left:463px;width:120px;text-align:center;margin-left:-60px;letter-spacing:1.50px;text-indent:1.50px">9:37</div>
<div class="c" style="left:599px;width:120px;text-align:center;margin-left:-60px;letter-spacing:2.10px;text-indent:2.10px">+1:13</div>
<div class="c" style="left:778px;width:120px;text-align:center;margin-left:-60px;letter-spacing:1.50px;text-indent:1.50px">42:46</div>
<div class="c" style="left:888px;letter-spacing:1.35px">17,0 x 8:24</div>
<div class="r" style="left:1061px">7:37-10:40, 11:04-12:02, 12:38-18:14</div>
<div class="r" style="left:1405px">T01 - Standardtag</div>
</div>
<div class="row " style="top:837px">
<svg style="left:6px;top:10px" width="12" height="14" viewBox="0 0 12 14"><path d="M3.5 2.5L8.5 7l-5 4.5" fill="none" stroke="#666" stroke-width="1.7"/></svg>
<svg style="left:34px;top:9px" width="16" height="17" viewBox="0 0 16 17"><defs><linearGradient id="g1" x1="0" y1="0" x2="0" y2="1"><stop offset="0" stop-color="#35b035"/><stop offset="0.55" stop-color="#5cc85c"/><stop offset="1" stop-color="#b4ecb0"/></linearGradient></defs><path d="M0.3 9.8L2.8 7.2 6 9.6C6.8 6.6 9 3 12.4 0.7 13.6 0.2 14.8 0.4 15 1.5 12.4 4.4 9.6 9.4 8.4 14.6L7 16.3 6.3 16.3Z" fill="url(#g1)" stroke="#3d7d3d" stroke-width="0.65" stroke-linejoin="round"/><path d="M1.4 9.9L2.9 8.4 6.3 11 7.3 14.8z" fill="#f2fcee"/><path d="M4.2 15.7L5.2 12.5 7.4 14.9Z" fill="#e8b070" stroke="#6b3a10" stroke-width="0.4"/><path d="M5.2 12.5L11.7 6.4 13.9 8.8 7.4 14.9Z" fill="#f5c800" stroke="#a86a00" stroke-width="0.45"/><path d="M11.7 6.4L12.6 5.55 14.8 7.95 13.9 8.8Z" fill="#b8b8c0"/><path d="M12.6 5.55L13.5 4.7 15.7 7.1 14.8 7.95Z" fill="#e04848" stroke="#8a2a10" stroke-width="0.35"/></svg>
<div class="c" style="left:91px">Fr, 12.12.25</div>
<div class="c" style="left:339px;width:120px;text-align:center;margin-left:-60px;letter-spacing:1.95px;text-indent:1.95px">8:24</div>
<div class="c" style="left:463px;width:120px;text-align:center;margin-left:-60px;letter-spacing:1.50px;text-indent:1.50px">8:42</div>
<div class="c" style="left:599px;width:120px;text-align:center;margin-left:-60px;letter-spacing:2.10px;text-indent:2.10px">+0:18</div>
<div class="c" style="left:778px;width:120px;text-align:center;margin-left:-60px;letter-spacing:1.50px;text-indent:1.50px">43:04</div>
<div class="c" style="left:888px;letter-spacing:1.35px">17,0 x 8:24</div>
<div class="r" style="left:1061px">7:47-12:05, HO 13:21-14:14, 14:32-18:03</div>
<div class="r" style="left:1405px">T01 - Standardtag</div>
</div>
<div class="row we" style="top:871px">
<svg style="left:6px;top:10px" width="12" height="14" viewBox="0 0 12 14"><path d="M3.5 2.5L8.5 7l-5 4.5" fill="none" stroke="#666" stroke-width="1.7"/></svg>
<svg style="left:34px;top:9px" width="16" height="17" viewBox="0 0 16 17"><defs><linearGradient id="g1" x1="0" y1="0" x2="0" y2="1"><stop offset="0" stop-color="#35b035"/><stop offset="0.55" stop-color="#5cc85c"/><stop offset="1" stop-color="#b4ecb0"/></linearGradient></defs><path d="M0.3 9.8L2.8 7.2 6 9.6C6.8 6.6 9 3 12.4 0.7 13.6 0.2 14.8 0.4 15 1.5 12.4 4.4 9.6 9.4 8.4 14.6L7 16.3 6.3 16.3Z" fill="url(#g1)" stroke="#3d7d3d" stroke-width="0.65" stroke-linejoin="round"/><path d="M1.4 9.9L2.9 8.4 6.3 11 7.3 14.8z" fill="#f2fcee"/></svg>
<div class="c" style="left:91px">Sa, 13.12.25</div>
<div class="c" style="left:778px;width:120px;text-align:center;margin-left:-60px;letter-spacing:1.50px;text-indent:1.50px">43:04</div>
<div class="c" style="left:888px;letter-spacing:1.35px">17,0 x 8:24</div>
<div class="r" style="left:1405px">T02 - Samstag</div>
</div>
<div class="row we" style="top:905px">
<svg style="left:6px;top:10px" width="12" height="14" viewBox="0 0 12 14"><path d="M3.5 2.5L8.5 7l-5 4.5" fill="none" stroke="#666" stroke-width="1.7"/></svg>
<svg style="left:34px;top:9px" width="16" height="17" viewBox="0 0 16 17"><defs><linearGradient id="g1" x1="0" y1="0" x2="0" y2="1"><stop offset="0" stop-color="#35b035"/><stop offset="0.55" stop-color="#5cc85c"/><stop offset="1" stop-color="#b4ecb0"/></linearGradient></defs><path d="M0.3 9.8L2.8 7.2 6 9.6C6.8 6.6 9 3 12.4 0.7 13.6 0.2 14.8 0.4 15 1.5 12.4 4.4 9.6 9.4 8.4 14.6L7 16.3 6.3 16.3Z" fill="url(#g1)" stroke="#3d7d3d" stroke-width="0.65" stroke-linejoin="round"/><path d="M1.4 9.9L2.9 8.4 6.3 11 7.3 14.8z" fill="#f2fcee"/></svg>
<div class="c" style="left:91px">So, 14.12.25</div>
<div class="c" style="left:463px;width:120px;text-align:center;margin-left:-60px;letter-spacing:1.50px;text-indent:1.50px">1:10</div>
<div class="c" style="left:599px;width:120px;text-align:center;margin-left:-60px;letter-spacing:2.10px;text-indent:2.10px">+1:10</div>
<div class="c" style="left:778px;width:120px;text-align:center;margin-left:-60px;letter-spacing:1.50px;text-indent:1.50px">44:14</div>
<div class="c" style="left:888px;letter-spacing:1.35px">17,0 x 8:24</div>
<div class="r" style="left:1061px">15:40-16:50</div>
<div class="r" style="left:1405px">T03 - Sonntag</div>
</div>
<div class="row " style="top:939px">
<svg style="left:6px;top:10px" width="12" height="14" viewBox="0 0 12 14"><path d="M3.5 2.5L8.5 7l-5 4.5" fill="none" stroke="#666" stroke-width="1.7"/></svg>
<svg style="left:34px;top:9px" width="16" height="17" viewBox="0 0 16 17"><defs><linearGradient id="g1" x1="0" y1="0" x2="0" y2="1"><stop offset="0" stop-color="#35b035"/><stop offset="0.55" stop-color="#5cc85c"/><stop offset="1" stop-color="#b4ecb0"/></linearGradient></defs><path d="M0.3 9.8L2.8 7.2 6 9.6C6.8 6.6 9 3 12.4 0.7 13.6 0.2 14.8 0.4 15 1.5 12.4 4.4 9.6 9.4 8.4 14.6L7 16.3 6.3 16.3Z" fill="url(#g1)" stroke="#3d7d3d" stroke-width="0.65" stroke-linejoin="round"/><path d="M1.4 9.9L2.9 8.4 6.3 11 7.3 14.8z" fill="#f2fcee"/></svg>
<div class="c" style="left:91px">Mo, 15.12.25</div>
<div class="c" style="left:339px;width:120px;text-align:center;margin-left:-60px;letter-spacing:1.95px;text-indent:1.95px">8:24</div>
<div class="c" style="left:463px;width:120px;text-align:center;margin-left:-60px;letter-spacing:1.50px;text-indent:1.50px">8:38</div>
<div class="c" style="left:599px;width:120px;text-align:center;margin-left:-60px;letter-spacing:2.10px;text-indent:2.10px">+0:14</div>
<div class="c" style="left:778px;width:120px;text-align:center;margin-left:-60px;letter-spacing:1.50px;text-indent:1.50px">44:28</div>
<div class="c" style="left:888px;letter-spacing:1.35px">17,0 x 8:24</div>
<div class="r" style="left:1061px">7:35-8:18, Ext. 8:18-9:19, 9:19-12:22, 12:52-16:43</div>
<div class="r" style="left:1405px">T01 - Standardtag</div>
</div>
<div class="row " style="top:973px">
<svg style="left:6px;top:10px" width="12" height="14" viewBox="0 0 12 14"><path d="M3.5 2.5L8.5 7l-5 4.5" fill="none" stroke="#666" stroke-width="1.7"/></svg>
<svg style="left:34px;top:9px" width="16" height="17" viewBox="0 0 16 17"><defs><linearGradient id="g1" x1="0" y1="0" x2="0" y2="1"><stop offset="0" stop-color="#35b035"/><stop offset="0.55" stop-color="#5cc85c"/><stop offset="1" stop-color="#b4ecb0"/></linearGradient></defs><path d="M0.3 9.8L2.8 7.2 6 9.6C6.8 6.6 9 3 12.4 0.7 13.6 0.2 14.8 0.4 15 1.5 12.4 4.4 9.6 9.4 8.4 14.6L7 16.3 6.3 16.3Z" fill="url(#g1)" stroke="#3d7d3d" stroke-width="0.65" stroke-linejoin="round"/><path d="M1.4 9.9L2.9 8.4 6.3 11 7.3 14.8z" fill="#f2fcee"/><path d="M4.2 15.7L5.2 12.5 7.4 14.9Z" fill="#e8b070" stroke="#6b3a10" stroke-width="0.4"/><path d="M5.2 12.5L11.7 6.4 13.9 8.8 7.4 14.9Z" fill="#f5c800" stroke="#a86a00" stroke-width="0.45"/><path d="M11.7 6.4L12.6 5.55 14.8 7.95 13.9 8.8Z" fill="#b8b8c0"/><path d="M12.6 5.55L13.5 4.7 15.7 7.1 14.8 7.95Z" fill="#e04848" stroke="#8a2a10" stroke-width="0.35"/></svg>
<div class="c" style="left:91px">Di, 16.12.25</div>
<div class="c" style="left:339px;width:120px;text-align:center;margin-left:-60px;letter-spacing:1.95px;text-indent:1.95px">8:24</div>
<div class="c" style="left:463px;width:120px;text-align:center;margin-left:-60px;letter-spacing:1.50px;text-indent:1.50px">10:00</div>
<div class="c" style="left:599px;width:120px;text-align:center;margin-left:-60px;letter-spacing:2.10px;text-indent:2.10px">+1:36</div>
<div class="c" style="left:778px;width:120px;text-align:center;margin-left:-60px;letter-spacing:1.50px;text-indent:1.50px">46:04</div>
<div class="c" style="left:888px;letter-spacing:1.35px">17,0 x 8:24</div>
<div class="r" style="left:1061px">7:57-12:16, 12:46-18:27</div>
<div class="r" style="left:1405px">T01 - Standardtag</div>
</div>
<div class="row " style="top:1007px">
<svg style="left:6px;top:10px" width="12" height="14" viewBox="0 0 12 14"><path d="M3.5 2.5L8.5 7l-5 4.5" fill="none" stroke="#666" stroke-width="1.7"/></svg>
<svg style="left:34px;top:9px" width="16" height="17" viewBox="0 0 16 17"><defs><linearGradient id="g1" x1="0" y1="0" x2="0" y2="1"><stop offset="0" stop-color="#35b035"/><stop offset="0.55" stop-color="#5cc85c"/><stop offset="1" stop-color="#b4ecb0"/></linearGradient></defs><path d="M0.3 9.8L2.8 7.2 6 9.6C6.8 6.6 9 3 12.4 0.7 13.6 0.2 14.8 0.4 15 1.5 12.4 4.4 9.6 9.4 8.4 14.6L7 16.3 6.3 16.3Z" fill="url(#g1)" stroke="#3d7d3d" stroke-width="0.65" stroke-linejoin="round"/><path d="M1.4 9.9L2.9 8.4 6.3 11 7.3 14.8z" fill="#f2fcee"/></svg>
<div class="c" style="left:91px">Mi, 17.12.25</div>
<div class="c" style="left:339px;width:120px;text-align:center;margin-left:-60px;letter-spacing:1.95px;text-indent:1.95px">8:24</div>
<div class="c" style="left:463px;width:120px;text-align:center;margin-left:-60px;letter-spacing:1.50px;text-indent:1.50px">9:16</div>
<div class="c" style="left:599px;width:120px;text-align:center;margin-left:-60px;letter-spacing:2.10px;text-indent:2.10px">+0:52</div>
<div class="c" style="left:778px;width:120px;text-align:center;margin-left:-60px;letter-spacing:1.50px;text-indent:1.50px">46:56</div>
<div class="c" style="left:888px;letter-spacing:1.35px">17,0 x 8:24</div>
<div class="r" style="left:1061px">8:00-12:17, 12:56-17:55</div>
<div class="r" style="left:1405px">T01 - Standardtag</div>
</div>
<div class="row " style="top:1041px">
<svg style="left:6px;top:10px" width="12" height="14" viewBox="0 0 12 14"><path d="M3.5 2.5L8.5 7l-5 4.5" fill="none" stroke="#666" stroke-width="1.7"/></svg>
<svg style="left:34px;top:9px" width="16" height="17" viewBox="0 0 16 17"><defs><linearGradient id="g1" x1="0" y1="0" x2="0" y2="1"><stop offset="0" stop-color="#35b035"/><stop offset="0.55" stop-color="#5cc85c"/><stop offset="1" stop-color="#b4ecb0"/></linearGradient></defs><path d="M0.3 9.8L2.8 7.2 6 9.6C6.8 6.6 9 3 12.4 0.7 13.6 0.2 14.8 0.4 15 1.5 12.4 4.4 9.6 9.4 8.4 14.6L7 16.3 6.3 16.3Z" fill="url(#g1)" stroke="#3d7d3d" stroke-width="0.65" stroke-linejoin="round"/><path d="M1.4 9.9L2.9 8.4 6.3 11 7.3 14.8z" fill="#f2fcee"/></svg>
<div class="c" style="left:91px">Do, 18.12.25</div>
<div class="c" style="left:339px;width:120px;text-align:center;margin-left:-60px;letter-spacing:1.95px;text-indent:1.95px">8:24</div>
<div class="c" style="left:463px;width:120px;text-align:center;margin-left:-60px;letter-spacing:1.50px;text-indent:1.50px">8:26</div>
<div class="c" style="left:599px;width:120px;text-align:center;margin-left:-60px;letter-spacing:2.10px;text-indent:2.10px">+0:02</div>
<div class="c" style="left:778px;width:120px;text-align:center;margin-left:-60px;letter-spacing:1.50px;text-indent:1.50px">46:58</div>
<div class="c" style="left:888px;letter-spacing:1.35px">17,0 x 8:24</div>
<div class="r" style="left:1061px">8:17-12:22, 13:07-17:28</div>
<div class="r" style="left:1405px">T01 - Standardtag</div>
</div>
<div class="row " style="top:1075px">
<svg style="left:6px;top:10px" width="12" height="14" viewBox="0 0 12 14"><path d="M3.5 2.5L8.5 7l-5 4.5" fill="none" stroke="#666" stroke-width="1.7"/></svg>
<svg style="left:34px;top:9px" width="16" height="17" viewBox="0 0 16 17"><defs><linearGradient id="g1" x1="0" y1="0" x2="0" y2="1"><stop offset="0" stop-color="#35b035"/><stop offset="0.55" stop-color="#5cc85c"/><stop offset="1" stop-color="#b4ecb0"/></linearGradient></defs><path d="M0.3 9.8L2.8 7.2 6 9.6C6.8 6.6 9 3 12.4 0.7 13.6 0.2 14.8 0.4 15 1.5 12.4 4.4 9.6 9.4 8.4 14.6L7 16.3 6.3 16.3Z" fill="url(#g1)" stroke="#3d7d3d" stroke-width="0.65" stroke-linejoin="round"/><path d="M1.4 9.9L2.9 8.4 6.3 11 7.3 14.8z" fill="#f2fcee"/></svg>
<div class="c" style="left:91px">Fr, 19.12.25</div>
<div class="c" style="left:339px;width:120px;text-align:center;margin-left:-60px;letter-spacing:1.95px;text-indent:1.95px">8:24</div>
<div class="c" style="left:463px;width:120px;text-align:center;margin-left:-60px;letter-spacing:1.50px;text-indent:1.50px">5:38</div>
<div class="c" style="left:599px;width:120px;text-align:center;margin-left:-60px;letter-spacing:2.10px;text-indent:2.10px">-2:46</div>
<div class="c" style="left:778px;width:120px;text-align:center;margin-left:-60px;letter-spacing:1.50px;text-indent:1.50px">44:12</div>
<div class="c" style="left:888px;letter-spacing:1.35px">17,0 x 8:24</div>
<div class="r" style="left:1061px">9:55-12:08, 12:44-16:09</div>
<div class="r" style="left:1405px">T01 - Standardtag</div>
</div>
<div class="row we" style="top:1109px">
<svg style="left:6px;top:10px" width="12" height="14" viewBox="0 0 12 14"><path d="M3.5 2.5L8.5 7l-5 4.5" fill="none" stroke="#666" stroke-width="1.7"/></svg>
<svg style="left:34px;top:9px" width="16" height="17" viewBox="0 0 16 17"><defs><linearGradient id="g1" x1="0" y1="0" x2="0" y2="1"><stop offset="0" stop-color="#35b035"/><stop offset="0.55" stop-color="#5cc85c"/><stop offset="1" stop-color="#b4ecb0"/></linearGradient></defs><path d="M0.3 9.8L2.8 7.2 6 9.6C6.8 6.6 9 3 12.4 0.7 13.6 0.2 14.8 0.4 15 1.5 12.4 4.4 9.6 9.4 8.4 14.6L7 16.3 6.3 16.3Z" fill="url(#g1)" stroke="#3d7d3d" stroke-width="0.65" stroke-linejoin="round"/><path d="M1.4 9.9L2.9 8.4 6.3 11 7.3 14.8z" fill="#f2fcee"/></svg>
<div class="c" style="left:91px">Sa, 20.12.25</div>
<div class="c" style="left:778px;width:120px;text-align:center;margin-left:-60px;letter-spacing:1.50px;text-indent:1.50px">44:12</div>
<div class="c" style="left:888px;letter-spacing:1.35px">17,0 x 8:24</div>
<div class="r" style="left:1405px">T02 - Samstag</div>
</div>
<div class="a" style="left:1895px;top:391px;width:15px;height:752px;background:#fbfbfb"></div>
<svg style="left:1897px;top:396px" width="11" height="8" viewBox="0 0 11 8"><path d="M5.5 1.5L10 6.8H1z" fill="#8c8c8c" stroke="#8c8c8c" stroke-width="1" stroke-linejoin="round"/></svg>
<div class="a" style="left:1898px;top:409px;width:9px;height:479px;background:#8c8c8c;border-radius:4.5px"></div>
<svg style="left:1897px;top:1132px" width="11" height="8" viewBox="0 0 11 8"><path d="M5.5 6.5L10 1.2H1z" fill="#8c8c8c" stroke="#8c8c8c" stroke-width="1" stroke-linejoin="round"/></svg>
<div class="a" style="left:0;top:151px;width:1910px;height:3px;background:linear-gradient(rgba(0,0,0,.22),rgba(0,0,0,0))"></div>
</body></html>
